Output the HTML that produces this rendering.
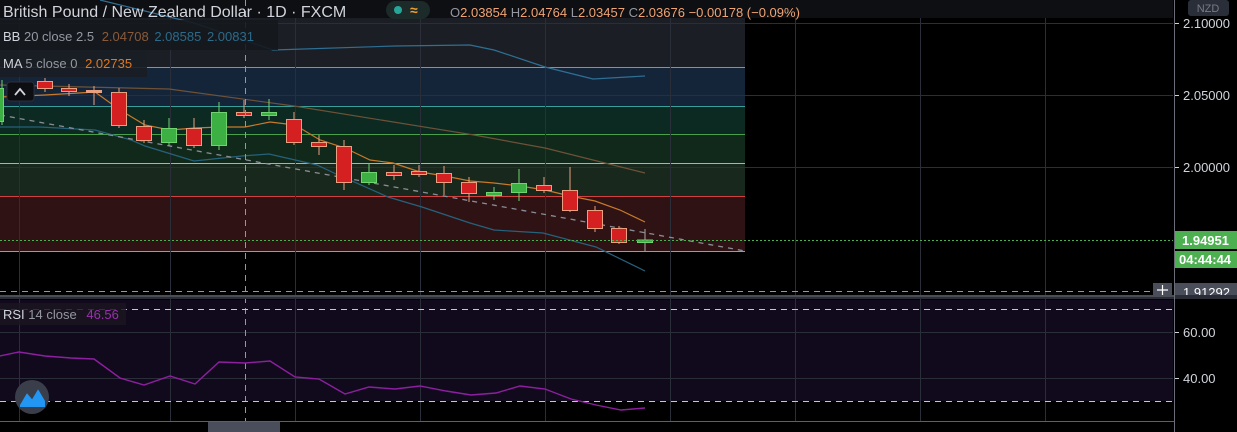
<!DOCTYPE html>
<html><head><meta charset="utf-8"><style>
html,body{margin:0;padding:0;background:#000;width:1237px;height:432px;overflow:hidden;font-family:"Liberation Sans",sans-serif}
svg{display:block}
</style></head><body>
<svg width="1237" height="432" xmlns="http://www.w3.org/2000/svg" font-family="Liberation Sans, sans-serif">
<rect width="1237" height="432" fill="#000"/>
<!-- fib bands -->
<rect x="0" y="18" width="745" height="49" fill="#1b1f25"/>
<rect x="0" y="67" width="745" height="39" fill="#14253a"/>
<rect x="0" y="106" width="745" height="28" fill="#0c2a22"/>
<rect x="0" y="134" width="745" height="29" fill="#11291a"/>
<rect x="0" y="163" width="745" height="33" fill="#19281c"/>
<rect x="0" y="196" width="745" height="55" fill="#2e1214"/>
<g stroke-width="1">
<line x1="0" y1="67.5" x2="745" y2="67.5" stroke="#5d9ccc"/>
<line x1="0" y1="106.5" x2="745" y2="106.5" stroke="#3a9f98"/>
<line x1="0" y1="134.5" x2="745" y2="134.5" stroke="#4aa04a"/>
<line x1="0" y1="163.5" x2="745" y2="163.5" stroke="#8cc88c"/>
<line x1="0" y1="196.5" x2="745" y2="196.5" stroke="#d04040"/>
<line x1="0" y1="251.5" x2="745" y2="251.5" stroke="#9a9aa0"/>
</g>
<!-- RSI bg -->
<rect x="0" y="300" width="1173" height="101" fill="#110a1d"/>
<!-- grid -->
<g stroke="#2a2e39" stroke-width="1">
<line x1="19.5" y1="0" x2="19.5" y2="421"/><line x1="170.5" y1="0" x2="170.5" y2="421"/>
<line x1="295.5" y1="0" x2="295.5" y2="421"/><line x1="420.5" y1="0" x2="420.5" y2="421"/>
<line x1="545.5" y1="0" x2="545.5" y2="421"/><line x1="670.5" y1="0" x2="670.5" y2="421"/>
<line x1="795.5" y1="0" x2="795.5" y2="421"/><line x1="920.5" y1="0" x2="920.5" y2="421"/>
<line x1="1045.5" y1="0" x2="1045.5" y2="421"/>
<line x1="0" y1="23.5" x2="1173" y2="23.5"/><line x1="0" y1="95.5" x2="1173" y2="95.5"/>
<line x1="0" y1="167.5" x2="1173" y2="167.5"/>
<line x1="0" y1="332.5" x2="1173" y2="332.5"/><line x1="0" y1="378.5" x2="1173" y2="378.5"/>
</g>
<!-- header -->
<rect x="0" y="0" width="1173" height="18" fill="#0e0f12"/>
<!-- BB lines -->
<polyline fill="none" stroke="#2f6f94" stroke-width="1.2" points="100,0 194,23 273,50 395,46 470,45 494,50 545,67 593,79 645,76"/>
<polyline fill="none" stroke="#26627c" stroke-width="1.2" points="0,127 40,127 95,130 131,140 145,146 194,161 242,156 269,154 317,165 334,173 388,197 422,207 470,223 494,230 543,233 596,247 645,271"/>
<polyline fill="none" stroke="#6e5238" stroke-width="1.2" points="0,85 169,89 294,106 474,135 545,148 645,173"/>
<polyline fill="none" stroke="#c8792a" stroke-width="1.2" points="0,97 45,95 95,92 120,110 145,125 170,130 195,128 220,127 245,127 270,122 295,125 320,140 345,148 370,160 393,163 420,172 445,176 470,181 494,183 520,186 545,190 570,196 595,201 620,210 645,222"/>
<line x1="0" y1="115" x2="745" y2="251" stroke="#8a8d96" stroke-width="1.3" stroke-dasharray="5,5"/>
<!-- candles -->
<g stroke-width="1">
<g stroke="#e8a080" fill="#d42020">
<line x1="45" y1="78" x2="45" y2="92"/><rect x="37.5" y="81.5" width="15" height="7"/>
<line x1="69" y1="84" x2="69" y2="96"/><rect x="61.5" y="88.5" width="15" height="3"/>
<line x1="94" y1="86" x2="94" y2="105"/><rect x="86.5" y="90.5" width="15" height="2" fill="#f0a070"/>
<line x1="119" y1="88" x2="119" y2="128"/><rect x="111.5" y="92.5" width="15" height="33"/>
<line x1="144" y1="120" x2="144" y2="143"/><rect x="136.5" y="126.5" width="15" height="14"/>
<line x1="194" y1="118" x2="194" y2="148"/><rect x="186.5" y="128.5" width="15" height="17"/>
<line x1="244" y1="100" x2="244" y2="118"/><rect x="236.5" y="112.5" width="15" height="3"/>
<line x1="294" y1="112" x2="294" y2="145"/><rect x="286.5" y="119.5" width="15" height="23"/>
<line x1="319" y1="135" x2="319" y2="155"/><rect x="311.5" y="142.5" width="15" height="4"/>
<line x1="344" y1="140" x2="344" y2="190"/><rect x="336.5" y="146.5" width="15" height="36"/>
<line x1="394" y1="165" x2="394" y2="180"/><rect x="386.5" y="172.5" width="15" height="3"/>
<line x1="419" y1="165" x2="419" y2="177"/><rect x="411.5" y="171.5" width="15" height="3"/>
<line x1="444" y1="166" x2="444" y2="195"/><rect x="436.5" y="173.5" width="15" height="9"/>
<line x1="469" y1="177" x2="469" y2="202"/><rect x="461.5" y="182.5" width="15" height="11"/>
<line x1="544" y1="177" x2="544" y2="193"/><rect x="536.5" y="185.5" width="15" height="5"/>
<line x1="570" y1="167" x2="570" y2="212"/><rect x="562.5" y="190.5" width="15" height="20"/>
<line x1="595" y1="206" x2="595" y2="232"/><rect x="587.5" y="210.5" width="15" height="18"/>
<line x1="619" y1="226" x2="619" y2="244"/><rect x="611.5" y="228.5" width="15" height="14"/>
</g>
<g stroke="#6fd36f" fill="#3cb043">
<line x1="2" y1="80" x2="2" y2="125"/><rect x="-5.5" y="88.5" width="9" height="33"/>
<line x1="169" y1="118" x2="169" y2="146"/><rect x="161.5" y="128.5" width="15" height="14"/>
<line x1="219" y1="102" x2="219" y2="150"/><rect x="211.5" y="112.5" width="15" height="33"/>
<line x1="269" y1="99" x2="269" y2="120"/><rect x="261.5" y="112.5" width="15" height="3"/>
<line x1="369" y1="163" x2="369" y2="185"/><rect x="361.5" y="172.5" width="15" height="10"/>
<line x1="494" y1="187" x2="494" y2="200"/><rect x="486.5" y="192.5" width="15" height="3"/>
<line x1="519" y1="169" x2="519" y2="201"/><rect x="511.5" y="183.5" width="15" height="9"/>
<line x1="645" y1="229" x2="645" y2="251" stroke="#aaa"/><rect x="637.5" y="240" width="15" height="2.5"/>
</g>
</g>
<!-- price line -->
<line x1="0" y1="240.5" x2="1173" y2="240.5" stroke="#4caf50" stroke-dasharray="2,2"/>
<!-- crosshair -->
<line x1="245.5" y1="0" x2="245.5" y2="432" stroke="#9598a1" stroke-dasharray="6,5"/>
<line x1="0" y1="291.5" x2="1173" y2="291.5" stroke="#9598a1" stroke-dasharray="6,5"/>
<rect x="0" y="295" width="1237" height="4" fill="#2a2d35"/>
<line x1="0" y1="296" x2="1237" y2="296" stroke="#6a6d75"/>
<!-- RSI -->
<line x1="0" y1="309.5" x2="1173" y2="309.5" stroke="#c8c8c8" stroke-dasharray="6,5"/>
<line x1="0" y1="401.5" x2="1173" y2="401.5" stroke="#c8c8c8" stroke-dasharray="6,5"/>
<polyline fill="none" stroke="#8e1fa0" stroke-width="1.4" points="0,356 19,352 45,356 71,358 94,359 120,378 144,385 170,376 195,384 219,362 245,363 270,361 295,377 319,379 345,394 369,387 395,389 420,386 446,391 471,395 496,393 520,386 545,389 571,399 596,405 621,410 645,408"/>
<rect x="0" y="303" width="126" height="22" fill="#1a1520" opacity="0.85"/>
<text x="3" y="319" font-size="13" fill="#d1d4dc">RSI <tspan fill="#9598a1">14 close</tspan> <tspan fill="#9a2fae" dx="6">46.56</tspan></text>
<circle cx="32" cy="397" r="17" fill="#3a3e4a"/>
<path d="M20 405 L27 393 L32 399 L38 389 L45 401 L45 407 L20 407 Z" fill="#2196f3"/>
<path d="M20 401 L27 392 L32 398 L38 388 L45 398" fill="none" stroke="#3a3e4a" stroke-width="1.5"/>
<!-- bottom axis -->
<line x1="0" y1="421.5" x2="1237" y2="421.5" stroke="#5d606b"/>
<rect x="208" y="422" width="72" height="10" fill="#4a4e5a"/>
<!-- legend -->
<rect x="0" y="20" width="278" height="30" fill="#15181e" opacity="0.9"/>
<rect x="0" y="50" width="147" height="27" fill="#1a1e25" opacity="0.9"/>
<text x="3" y="41" font-size="13" fill="#d1d4dc">BB <tspan fill="#9598a1">20 close 2.5</tspan> <tspan fill="#8a5a3a" dx="4">2.04708</tspan> <tspan fill="#2b6a8a" dx="2">2.08585</tspan> <tspan fill="#2b6a8a" dx="2">2.00831</tspan></text>
<text x="3" y="68" font-size="13" fill="#d1d4dc">MA <tspan fill="#9598a1">5 close 0</tspan> <tspan fill="#e07820" dx="4">2.02735</tspan></text>
<rect x="7" y="82" width="27" height="19" rx="3" fill="#0c0e12" stroke="#2a2e39"/>
<path d="M15 95 L20 89 L25 95" fill="none" stroke="#d1d4dc" stroke-width="1.8"/>
<!-- header text -->
<text x="3" y="17" font-size="16" fill="#d1d4dc">British Pound / New Zealand Dollar · 1D · FXCM</text>
<rect x="386" y="1" width="44" height="18" rx="9" fill="#1c2a2a"/>
<circle cx="398" cy="10" r="4" fill="#26a69a"/>
<text x="410" y="15" font-size="14" fill="#f0a030" font-weight="bold">≈</text>
<text x="450" y="17" font-size="13" fill="#9598a1">O<tspan fill="#f0a474">2.03854</tspan> H<tspan fill="#f0a474">2.04764</tspan> L<tspan fill="#f0a474">2.03457</tspan> C<tspan fill="#f0a474">2.03676</tspan> <tspan fill="#f0a474">−0.00178 (−0.09%)</tspan></text>
<!-- price scale -->
<rect x="1174" y="0" width="63" height="432" fill="#000"/>
<line x1="1174.5" y1="0" x2="1174.5" y2="432" stroke="#6a6d75"/>
<rect x="1188" y="0" width="41" height="16" rx="3" fill="#2a2e39"/>
<text x="1208" y="12" font-size="11" fill="#787b86" text-anchor="middle">NZD</text>
<g font-size="13" fill="#d1d4dc">
<line x1="1175" y1="23.5" x2="1179" y2="23.5" stroke="#d1d4dc"/><text x="1183" y="28">2.10000</text>
<line x1="1175" y1="95.5" x2="1179" y2="95.5" stroke="#d1d4dc"/><text x="1183" y="100">2.05000</text>
<line x1="1175" y1="167.5" x2="1179" y2="167.5" stroke="#d1d4dc"/><text x="1183" y="172">2.00000</text>
<line x1="1175" y1="332.5" x2="1179" y2="332.5" stroke="#d1d4dc"/><text x="1183" y="337">60.00</text>
<line x1="1175" y1="378.5" x2="1179" y2="378.5" stroke="#d1d4dc"/><text x="1183" y="383">40.00</text>
</g>
<rect x="1175" y="231" width="62" height="18" fill="#4caf50"/>
<text x="1182" y="245" font-size="13" fill="#fff" font-weight="bold">1.94951</text>
<rect x="1175" y="251" width="62" height="17" fill="#4caf50"/>
<text x="1179" y="264" font-size="13" fill="#fff" font-weight="bold">04:44:44</text>
<rect x="1153" y="283" width="19" height="12" fill="#4a4e5a"/>
<path d="M1157 290 H1168 M1162.5 285 V295" stroke="#fff" stroke-width="1.2"/>
<rect x="1175" y="283" width="62" height="12" fill="#4a4e5a"/>
<text x="1183" y="297" font-size="13" fill="#fff">1.91292</text>
<rect x="1175" y="295" width="62" height="4" fill="#2a2d35"/>
</svg>
</body></html>
